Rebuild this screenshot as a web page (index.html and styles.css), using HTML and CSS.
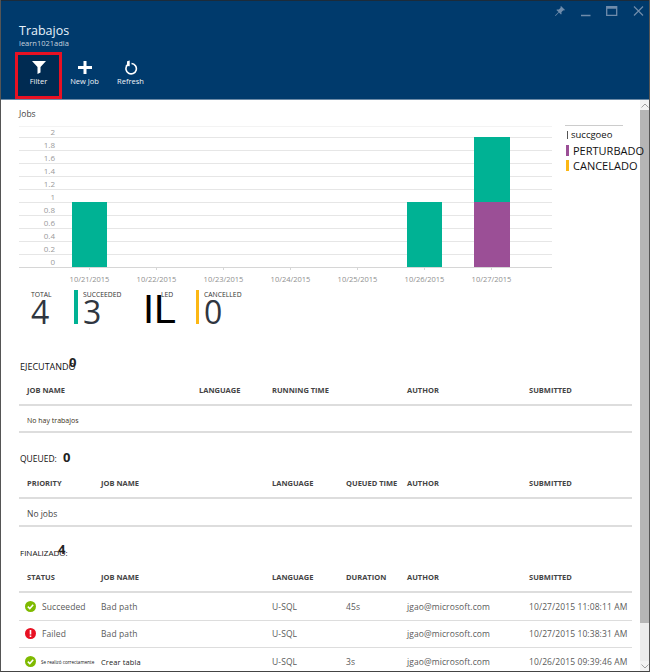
FILE: index.html
```html
<!DOCTYPE html>
<html lang="es">
<head>
    <meta charset="UTF-8">
    <title>Trabajos</title>
    <link rel="stylesheet" href="styles.css">
</head>
<body>
    <div class="blade">
        <header class="header">
            <div class="window-icons">
                <svg width="12" height="12" viewBox="0 0 12 12"><path d="M7 1l4 4-1 .6-.7-.3L7.400 7.200 7.600 9 7 9.600 4.900 7.500 1.600 11 1 10.400 4.500 7.100 2.400 5l.6-.6 1.800.2L6.700 2.700 6.400 2z" fill="#6f8cab"/></svg>
                <svg width="10" height="12" viewBox="0 0 10 12"><path d="M0 10.500h9.500" stroke="#6f8cab" stroke-width="1.500"/></svg>
                <svg width="12" height="12" viewBox="0 0 12 12"><path d="M.7 1.700h10v8.600H.7zM.7 3h10" fill="none" stroke="#6f8cab" stroke-width="1.300"/></svg>
                <svg width="11" height="12" viewBox="0 0 11 12"><path d="M1 1.500l9 9M10 1.500l-9 9" stroke="#6f8cab" stroke-width="1.200"/></svg>
            </div>
            <h1 class="title">Trabajos</h1>
            <div class="subtitle">learn1021adla</div>
            <div class="toolbar">
                <div class="tool tool-active">
                    <svg width="14" height="13" viewBox="0 0 14 13"><path d="M0 0h14L8.500 6V11.500l-3 1.500V6z" fill="#fff"/></svg>
                    <span>Filter</span>
                </div>
                <div class="tool">
                    <svg width="14" height="13" viewBox="0 0 14 13"><path d="M5.500 0h3v5H14v3H8.500v5h-3V8H0V5h5.500z" fill="#fff"/></svg>
                    <span>New Job</span>
                </div>
                <div class="tool">
                    <svg class="icon-refresh" width="14" height="15" viewBox="0 0 14 15"><path d="M7.500 3.500A5.200 5.200 0 1 1 3.300 5.200" fill="none" stroke="#fff" stroke-width="1.600"/><path d="M5.700 .5v5.800L1.300 5.800l1.600-1.300.2-3.200z" fill="#fff"/></svg>
                    <span>Refresh</span>
                </div>
            </div>
        </header>

        <div class="content">
            <main class="main">
                <div class="jobs-label">Jobs</div>
                <div class="chart-row">
                    <svg class="chart" width="535" height="167" viewBox="0 0 535 167">
                        <g class="grid">
                            <path class="grid-top" d="M0 .5h533"/>
                            <path d="M0 11.500h533M0 24.500h533M0 37.500h533M0 50.500h533M0 63.500h533M0 76.500h533M0 89.500h533M0 102.500h533M0 115.500h533M0 128.500h533"/>
                            <path class="axis" d="M0 141.500h533M70.500 141v3M137.500 141v3M204.500 141v3M271.500 141v3M338.500 141v3M405.500 141v3M472.500 141v3"/>
                        </g>
                        <g class="y-labels">
                            <text x="36" y="9">2</text>
                            <text x="36" y="22">1.8</text>
                            <text x="36" y="35">1.6</text>
                            <text x="36" y="48">1.4</text>
                            <text x="36" y="61">1.2</text>
                            <text x="36" y="74">1</text>
                            <text x="36" y="87">0.8</text>
                            <text x="36" y="100">0.6</text>
                            <text x="36" y="113">0.4</text>
                            <text x="36" y="126">0.2</text>
                            <text x="36" y="139">0</text>
                        </g>
                        <rect x="53" y="76" width="35" height="65" fill="#00b294"/>
                        <rect x="388" y="76" width="35" height="65" fill="#00b294"/>
                        <rect x="455" y="11" width="36" height="65" fill="#00b294"/>
                        <rect x="455" y="76" width="36" height="65" fill="#9b4f96"/>
                        <g class="x-labels">
                            <text x="70.500" y="156">10/21/2015</text>
                            <text x="137.500" y="156">10/22/2015</text>
                            <text x="204.500" y="156">10/23/2015</text>
                            <text x="271.500" y="156">10/24/2015</text>
                            <text x="338.500" y="156">10/25/2015</text>
                            <text x="405.500" y="156">10/26/2015</text>
                            <text x="472.500" y="156">10/27/2015</text>
                        </g>
                    </svg>
                    <div class="legend">
                        <div class="legend-item legend-small"><i class="swatch swatch-thin"></i>succgoeo</div>
                        <div class="legend-item"><i class="swatch swatch-purple"></i>PERTURBADO</div>
                        <div class="legend-item"><i class="swatch swatch-yellow"></i>CANCELADO</div>
                    </div>
                </div>

                <div class="stats">
                    <div class="stat stat-total">
                        <div class="stat-label">TOTAL</div>
                        <div class="stat-value">4</div>
                    </div>
                    <div class="stat stat-ok">
                        <div class="stat-label">SUCCEEDED</div>
                        <div class="stat-value">3</div>
                    </div>
                    <div class="stat stat-failed">
                        <div class="stat-label">LED</div>
                        <div class="stat-big">IL</div>
                    </div>
                    <div class="stat stat-cancel">
                        <div class="stat-label">CANCELLED</div>
                        <div class="stat-value">0</div>
                    </div>
                </div>

                <section class="section section-running">
                    <div class="section-title">EJECUTANDO<b class="count count-running">0</b></div>
                    <div class="row row-head cols-running">
                        <span>JOB NAME</span><span>LANGUAGE</span><span>RUNNING TIME</span><span>AUTHOR</span><span>SUBMITTED</span>
                    </div>
                    <div class="row row-empty row-tiny">No hay trabajos</div>
                </section>

                <section class="section section-queued">
                    <div class="section-title">QUEUED:<b class="count count-queued">0</b></div>
                    <div class="row row-head cols-queued">
                        <span>PRIORITY</span><span>JOB NAME</span><span>LANGUAGE</span><span>QUEUED TIME</span><span>AUTHOR</span><span>SUBMITTED</span>
                    </div>
                    <div class="row row-empty">No jobs</div>
                </section>

                <section class="section section-done">
                    <div class="section-title">FINALIZADO:<b class="count count-done">4</b></div>
                    <div class="row row-head cols-queued">
                        <span>STATUS</span><span>JOB NAME</span><span>LANGUAGE</span><span>DURATION</span><span>AUTHOR</span><span>SUBMITTED</span>
                    </div>
                    <div class="row row-job cols-queued">
                        <span class="status"><svg width="11" height="11" viewBox="0 0 11 11"><circle cx="5.500" cy="5.500" r="5.500" fill="#7fba00"/><path d="M2.800 5.600l2 2 3.400-3.800" fill="none" stroke="#fff" stroke-width="1.500"/></svg>Succeeded</span>
                        <span>Bad path</span><span>U-SQL</span><span>45s</span><span>jgao@microsoft.com</span><span>10/27/2015 11:08:11 AM</span>
                    </div>
                    <div class="row row-job cols-queued">
                        <span class="status"><svg width="11" height="11" viewBox="0 0 11 11"><circle cx="5.500" cy="5.500" r="5.500" fill="#e81123"/><path d="M4.700 2h1.600v4.500H4.700zM4.700 7.400h1.600V9H4.700z" fill="#fff"/></svg>Failed</span>
                        <span>Bad path</span><span>U-SQL</span><span></span><span>jgao@microsoft.com</span><span>10/27/2015 10:38:31 AM</span>
                    </div>
                    <div class="row row-job cols-queued row-last">
                        <span class="status status-tiny"><svg width="11" height="11" viewBox="0 0 11 11"><circle cx="5.500" cy="5.500" r="5.500" fill="#7fba00"/><path d="M2.800 5.600l2 2 3.400-3.800" fill="none" stroke="#fff" stroke-width="1.500"/></svg>Se realizó correctamente</span>
                        <span class="job-black">Crear tabla</span><span>U-SQL</span><span>3s</span><span>jgao@microsoft.com</span><span>10/26/2015 09:39:46 AM</span>
                    </div>
                </section>
            </main>

            <div class="scrollbar">
                <div class="scroll-arrow">
                    <svg width="8" height="5" viewBox="0 0 8 5"><path d="M.5 4.500L4 1l3.500 3.500" fill="none" stroke="#a0a0a0"/></svg>
                </div>
                <div class="scroll-thumb"></div>
                <div class="scroll-arrow">
                    <svg width="8" height="5" viewBox="0 0 8 5"><path d="M.5.500L4 4 7.500.500" fill="none" stroke="#a0a0a0"/></svg>
                </div>
            </div>
        </div>
    </div>
</body>
</html>
```

FILE: styles.css
```css
* {
    box-sizing: border-box;
}

html, body {
    margin: 0;
    height: 672px;
    overflow: hidden;
}

body {
    font-family: "Open Sans", "Noto Sans", sans-serif;
    background: #fff;
    color: #5a5a5a;
}

.blade {
    width: 650px;
    height: 672px;
    border-left: 1px solid #555;
    border-right: 1px solid #555;
    border-bottom: 1px solid #444;
    display: flex;
    flex-direction: column;
    overflow: hidden;
}

.header {
    position: relative;
    height: 100px;
    flex: none;
    background: #003a6c;
    border-top: 1px solid #1c2b3a;
    border-bottom: 1px solid #6d8aa6;
    padding: 21px 0 0 18px;
    color: #fff;
}

.window-icons {
    position: absolute;
    top: 4px;
    right: 5px;
    display: flex;
    gap: 15px;
}

.title {
    margin: 0;
    font-size: 12.500px;
    line-height: 17px;
    font-weight: 400;
    color: #e8f3fb;
}

.subtitle {
    font-size: 7.500px;
    line-height: 9px;
    color: #c5d2de;
}

.toolbar {
    display: flex;
    margin: 4px 0 0 -4px;
}

.tool {
    width: 45px;
    height: 47px;
    margin-right: 1px;
    padding-top: 9px;
    display: flex;
    flex-direction: column;
    align-items: center;
    gap: 2px;
    font-size: 7.500px;
    line-height: 10px;
    color: #f0f4f8;
}

.tool svg {
    flex: none;
}

.icon-refresh {
    margin: -1px 0 -1px;
}

.tool-active {
    width: 47px;
    background: #002b52;
    border: 3px solid #e81123;
    padding-top: 6px;
    margin-right: 0;
}

.content {
    flex: 1;
    display: flex;
    min-height: 0;
}

.main {
    flex: 1;
    min-width: 0;
    padding: 8px 8px 0 18px;
}

.jobs-label {
    font-size: 8.500px;
    line-height: 11px;
    color: #444;
}

.chart-row {
    display: flex;
    margin-top: 7px;
}

.chart {
    flex: none;
    display: block;
}

.grid path {
    fill: none;
    stroke: #e6e6e6;
    stroke-width: 1;
}

.grid .grid-top {
    stroke: #f3f3f3;
}

.grid .axis {
    stroke: #d6d6d6;
}

.y-labels text {
    font-size: 8px;
    fill: #9a9a9a;
    text-anchor: end;
}

.x-labels text {
    font-size: 7.500px;
    fill: #8f8f8f;
    text-anchor: middle;
}

.legend {
    flex: none;
    width: 76px;
    height: 60px;
    margin: -1px 0 0 11px;
    position: relative;
    z-index: 1;
    color: #111;
}

.legend::before {
    content: "";
    display: block;
    width: 58px;
    border-top: 1px solid #ccc;
}

.legend-item {
    display: flex;
    align-items: center;
    height: 15.500px;
    padding-left: 1px;
    font-size: 11px;
    white-space: nowrap;
    gap: 4px;
}

.legend-small {
    font-size: 9.500px;
    gap: 3px;
    padding-left: 2px;
    margin-top: 1px;
}

.swatch {
    width: 3px;
    height: 11px;
    flex: none;
}

.swatch-thin {
    width: 1px;
    height: 8px;
    background: #555;
}

.swatch-purple {
    background: #9b4f96;
}

.swatch-yellow {
    background: #fcb714;
}

.stats {
    display: flex;
    margin-top: -3px;
    height: 35px;
}

.stat {
    position: relative;
    padding-left: 8px;
}

.stat-total {
    width: 43px;
    margin-left: 12px;
    padding-left: 0;
}

.stat-ok {
    width: 71px;
    padding-left: 9px;
}

.stat-ok::before,
.stat-cancel::before {
    content: "";
    position: absolute;
    left: 0;
    top: 0;
    width: 4px;
    height: 34px;
    background: #00b294;
}

.stat-cancel::before {
    width: 3px;
    background: #fcb714;
}

.stat-failed {
    width: 51px;
    padding-left: 0;
}

.stat-label {
    font-size: 6.800px;
    line-height: 9px;
    color: #333;
    white-space: nowrap;
}

.stat-failed .stat-label {
    padding-left: 16px;
}

.stat-value {
    font-size: 32px;
    line-height: 25px;
    color: #2f3640;
}

.stat-big {
    position: absolute;
    left: -2px;
    top: 0;
    font-family: "Liberation Sans", sans-serif;
    font-size: 40px;
    line-height: 38px;
    color: #000;
}

.section-running {
    margin-top: 34px;
}

.section-queued,
.section-done {
    margin-top: 18px;
}

.section-title {
    position: relative;
    height: 15px;
    padding-left: 1px;
    font-size: 8px;
    line-height: 15px;
    color: #111;
    white-space: nowrap;
}

.section-running .section-title {
    font-size: 9px;
}

.section-queued .section-title {
    font-size: 8.500px;
}

.count {
    position: absolute;
    top: -4px;
    font-size: 13px;
    line-height: 15px;
    font-weight: 700;
    color: #222;
}

.count-running {
    left: 50px;
}

.count-queued {
    left: 44px;
    top: -1px;
}

.count-done {
    left: 39px;
    top: -3px;
}

.row {
    display: grid;
    align-items: center;
    padding-left: 8px;
    width: 613px;
    border-bottom: 1px solid #ddd;
    font-size: 8.500px;
    white-space: nowrap;
}

.row-head {
    height: 33px;
    border-bottom: 2px solid #ddd;
    padding-top: 3px;
    font-size: 7.500px;
    font-weight: 700;
    color: #444;
}

.section-running .row-head {
    height: 32px;
    padding-top: 2px;
}

.cols-running {
    grid-template-columns: 172px 73px 135px 122px 1fr;
}

.cols-queued {
    grid-template-columns: 74px 171px 74px 61px 122px 1fr;
}

.row-empty {
    height: 28px;
    padding-top: 2px;
    border-bottom-width: 2px;
    color: #444;
}

.row-tiny {
    height: 27px;
    padding-top: 3px;
    font-size: 7px;
    color: #3a3020;
}

.row-job {
    height: 27.500px;
    letter-spacing: 0.100px;
}

.row-last {
    border-bottom: none;
}

.status {
    display: flex;
    align-items: center;
    gap: 6px;
    margin-left: -2px;
}

.status svg {
    flex: none;
}

.status-tiny {
    font-size: 4.600px;
    color: #111;
    gap: 5px;
    letter-spacing: 0;
}

.job-black {
    color: #222;
    font-size: 7.500px;
}

.scrollbar {
    width: 9px;
    flex: none;
    display: flex;
    flex-direction: column;
    background: #ececec;
}

.scroll-arrow {
    height: 10px;
    flex: none;
    display: flex;
    align-items: center;
    justify-content: center;
    background: #f3f3f3;
}

.scroll-thumb {
    height: 513px;
    background: #b5b5b5;
}

.scroll-arrow:last-child {
    margin-top: auto;
}
```
